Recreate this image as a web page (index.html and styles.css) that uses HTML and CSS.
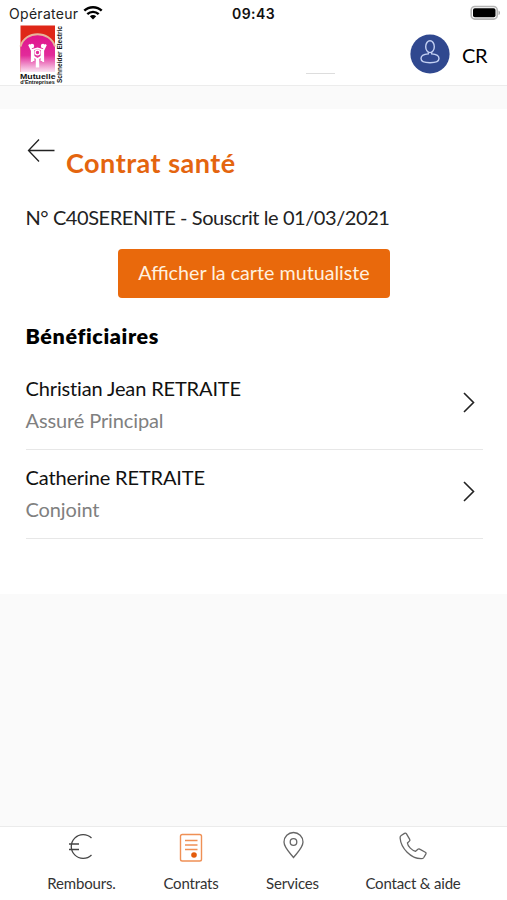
FILE: index.html
```html
<!DOCTYPE html>
<html lang="fr">
<head>
<meta charset="utf-8">
<title>Contrat santé</title>
<link rel="stylesheet" href="styles.css">
</head>
<body>
<div class="app">
  <header class="header">
    <div class="status">
      <div class="carrier"><span>Opérateur</span>
        <svg width="20" height="14" viewBox="0 0 20 14" fill="none" stroke="#000" stroke-width="2.4"><path d="M1.300 4.700C6 .1 14 .1 18.700 4.700M4.300 8.200c3.300-3.100 8.100-3.100 11.400 0"/><path d="M10 13.600 6.800 10.300c1.800-1.700 4.600-1.700 6.400 0z" fill="#000" stroke="none"/></svg>
      </div>
      <time class="clock">09:43</time>
      <svg class="battery" width="32" height="16" viewBox="0 0 32 16"><rect x="2.200" y="1.500" width="26" height="12.600" rx="3.600" fill="#fff" stroke="#b5b5b5" stroke-width="1.600"/><rect x="4" y="3.300" width="22.500" height="9" rx="1.800" fill="#000"/><path d="M29.500 5.500c2 .8 2 3.800 0 4.600z" fill="#aaa"/></svg>
    </div>
    <div class="brandbar">
      <svg class="logo" width="48" height="60" viewBox="0 0 48 60">
        <defs><linearGradient id="pink" x1="0" y1="0" x2="0" y2="1"><stop offset="0" stop-color="#e0148c"/><stop offset=".55" stop-color="#e22b9a"/><stop offset="1" stop-color="#fbe3f1"/></linearGradient></defs>
        <rect x="2.500" y=".5" width="34.500" height="46.500" fill="#df2718"/>
        <path d="M2.500 22C7 6 32 6 37 22V47H2.500z" fill="url(#pink)"/>
        <path d="M2.500 21.500C7 5 32 5 37 21.500" fill="none" stroke="#e7b49c" stroke-width="2"/>
        <g fill="#fff"><circle cx="14" cy="21" r="2.200"/><circle cx="25" cy="21" r="2.200"/></g>
        <path d="M11 19.500l2.800 6v11.500M28 19.500l-2.800 6v11.500M15.500 25v11M23.500 25v11M13.500 25l6-1.500 6 1.500" fill="none" stroke="#fff" stroke-width="1.800"/>
        <path d="M15.500 31.500l4 2.500 4-2.500M18.700 33v9.500M20.300 33v9.500" fill="none" stroke="#fff" stroke-width="1.800"/>
        <circle cx="19.500" cy="27.500" r="2.300" fill="#e22b9a" stroke="#fff" stroke-width="1.200"/>
        <text x="2" y="53.500" class="logo-name" textLength="35.500" lengthAdjust="spacingAndGlyphs">Mutuelle</text>
        <text x="2.300" y="58.700" class="logo-sub" textLength="34.500" lengthAdjust="spacingAndGlyphs">d'Entreprises</text>
        <text transform="translate(44.300 58) rotate(-90)" class="logo-side" textLength="57" lengthAdjust="spacingAndGlyphs">Schneider Electric</text>
      </svg>
      <span class="dash"></span>
      <svg class="avatar" width="40" height="40" viewBox="0 0 40 40"><circle cx="20" cy="20" r="19.600" fill="#30488f"/><g fill="none" stroke="#c3d0f3" stroke-width="1.400"><ellipse cx="20" cy="12.700" rx="4.300" ry="5.900"/><path d="M18.300 18.200v1.700c-4.700.3-7.300 2.300-7.300 4.600 0 2.600 3.800 4.200 9 4.200s9-1.600 9-4.200c0-2.300-2.600-4.300-7.300-4.600v-1.700"/></g></svg>
      <span class="initials">CR</span>
    </div>
  </header>

  <main class="card">
    <div class="title-row">
      <svg class="back" width="28" height="24" viewBox="0 0 28 24" fill="none" stroke="#222" stroke-width="1.300"><path d="M27.500 12.500H1.500M12 1.500 1.500 12.500l10.500 11"/></svg>
      <h1 class="title">Contrat santé</h1>
    </div>
    <p class="number">N° C40SERENITE - Souscrit le 01/03/2021</p>
    <button class="cta">Afficher la carte mutualiste</button>
    <h2 class="subtitle">Bénéficiaires</h2>
    <ul class="people">
      <li class="person"><div><div class="name">Christian Jean RETRAITE</div><div class="role">Assuré Principal</div></div>
        <svg width="13" height="22" viewBox="0 0 13 22" fill="none" stroke="#222" stroke-width="1.600"><path d="m2 2 9.500 9.500L2 21"/></svg></li>
      <li class="person"><div><div class="name">Catherine RETRAITE</div><div class="role">Conjoint</div></div>
        <svg width="13" height="22" viewBox="0 0 13 22" fill="none" stroke="#222" stroke-width="1.600"><path d="m2 2 9.500 9.500L2 21"/></svg></li>
    </ul>
  </main>

  <nav class="tabs">
    <a class="tab"><svg width="28" height="32" viewBox="0 0 28 32" fill="none" stroke="#444" stroke-width="1.300"><path d="M23.500 8A11.900 11.900 0 1 0 23.500 25M1 14h10M1 19.500h10"/></svg><span>Rembours.</span></a>
    <a class="tab"><svg width="28" height="32" viewBox="0 0 28 32" fill="none" stroke="#ef9055" stroke-width="1.400"><rect x="3.500" y="4.500" width="21" height="26.500" rx="1.800"/><path d="M8 10.500h12.500M8 15h12.500M8 19.500h12.500"/><circle cx="17" cy="25" r="2.800" fill="#e35b0b" stroke="none"/></svg><span>Contrats</span></a>
    <a class="tab"><svg width="28" height="32" viewBox="0 0 28 32" fill="none" stroke="#666" stroke-width="1.300"><path d="M14.500 27.500C11 23 5 17.500 5 12a9.500 9.500 0 0 1 19 0c0 5.500-6 11-9.500 15.500z"/><circle cx="14.500" cy="12" r="3.300"/></svg><span>Services</span></a>
    <a class="tab"><svg width="30" height="32" viewBox="0 0 30 32" fill="none" stroke="#666" stroke-width="1.300" stroke-linejoin="round"><path d="M3.200 5.500 6.500 3.400c.8-.5 1.500-.3 2 .4l3.200 5.500c.4.700.3 1.300-.3 1.800L9.400 13c.4 3.500 4.600 7.500 8.200 8.300l2.300-2.100c.6-.5 1.200-.5 1.800-.1l5.600 3.100c.8.500 1 1.100.5 1.900l-2 3.400c-.6.900-1.500 1.300-2.800 1.200C13 28.500 3 18.500 2.100 8c-.1-1.100.3-2 1.100-2.500z"/></svg><span>Contact &amp; aide</span></a>
  </nav>
</div>
</body>
</html>
```
FILE: styles.css
```css
* { box-sizing: border-box; }
body { margin: 0; font-family: Lato, sans-serif; color: #111; }
.app { display: flex; flex-direction: column; width: 507px; height: 900px; background: #fafafa; }
.header { flex: none; height: 86px; background: #fff; border-bottom: 1px solid #ececec; }
.status { display: grid; grid-template-columns: 1fr auto 1fr; align-items: center; height: 25px; padding: 1px 6px 0 9px; font-family: Inter, sans-serif; }
.carrier { display: flex; align-items: center; gap: 5px; font-size: 14px; letter-spacing: .3px; color: #222; }
.clock { margin-right: 3px; font-size: 14px; font-weight: 600; letter-spacing: .4px; }
.battery { justify-self: end; }
.brandbar { display: flex; align-items: flex-start; height: 60px; padding: 0 19px 0 18px; }
.logo { flex: none; overflow: visible; }
.logo text { font-family: "Liberation Sans", sans-serif; fill: #111; }
.logo .logo-name { font-size: 7.500px; font-weight: 700; }
.logo .logo-sub { font-size: 6px; font-weight: 700; }
.logo .logo-side { font-size: 7px; font-weight: 700; }
.dash { width: 29px; height: 1px; margin: 48px 75px 0 240px; background: #ddd; }
.avatar { flex: none; margin-top: 9px; }
.initials { margin: 18px 0 0 12px; font-size: 20px; line-height: 24px; letter-spacing: -.3px; color: #000; }
.card { flex: none; height: 485px; margin-top: 23px; padding: 29px 24px 0 25.500px; background: #fff; }
.title-row { display: flex; align-items: flex-start; gap: 11px; height: 62px; }
.back { flex: none; margin-left: 1.500px; }
.title { margin: 8px 0 0; font-size: 27px; line-height: 34px; font-weight: 700; letter-spacing: .5px; color: #e4650f; white-space: nowrap; }
.number { margin: 5px 0 0; font-size: 20px; line-height: 24px; letter-spacing: -.43px; color: #222; white-space: nowrap; }
.cta { display: block; width: 272px; height: 49px; margin: 20px 0 0 92.500px; padding: 0 0 1px; border: 0; border-radius: 4px; background: #e9690c; color: #fff0df; font: 19.700px/48px Lato, sans-serif; white-space: nowrap; }
.subtitle { margin: 25px 0 0; font-size: 21.500px; line-height: 26px; font-weight: 800; letter-spacing: .63px; color: #000; }
.people { margin: 12px 0 0; padding: 0; list-style: none; }
.person { display: flex; justify-content: space-between; height: 89px; padding: 15px 8.500px 0 0; border-bottom: 1px solid #e7e7e7; }
.person svg { margin-top: 15px; }
.name { font-size: 20px; line-height: 24px; letter-spacing: -.14px; white-space: nowrap; }
.role { margin-top: 8px; font-size: 20px; line-height: 24px; letter-spacing: -.12px; color: #808080; }
.tabs { flex: none; display: grid; grid-template-columns: 109px 110px 93px 148px; height: 74px; margin-top: auto; padding-left: 27px; background: #fff; border-top: 1px solid #ebebeb; }
.tab { display: flex; flex-direction: column; align-items: center; padding-top: 3px; font-size: 15px; line-height: 18px; letter-spacing: -.18px; color: #333; white-space: nowrap; }
.tab span { margin-top: 12px; }
```
